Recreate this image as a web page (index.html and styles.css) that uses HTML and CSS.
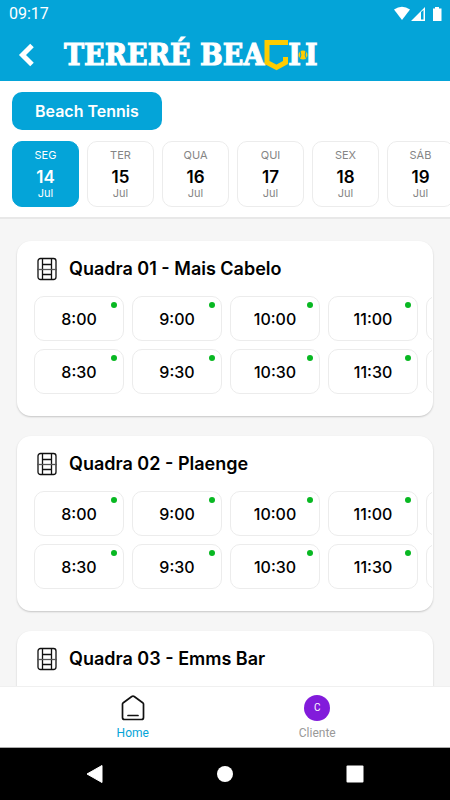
FILE: index.html
```html
<!DOCTYPE html>
<html lang="pt-BR">
<head>
<meta charset="utf-8">
<meta name="viewport" content="width=device-width, initial-scale=1">
<title>Tereré Beach</title>
<link rel="stylesheet" href="styles.css">
</head>
<body>
<svg class="symbols" aria-hidden="true">
  <symbol id="court" viewBox="0 0 20 24">
    <g fill="none" stroke="#111" stroke-width="1.3">
      <rect x="1" y="1.5" width="18" height="21" rx="2.5"/>
      <path d="M5.500 1.500v21M14.500 1.500v21M5.500 7.500h9M5.500 17.500h9"/>
      <path d="M0 12.500h20" stroke="#555"/>
    </g>
  </symbol>
</svg>
<header class="top">
  <div class="status">
    <span>09:17</span>
    <svg width="50" height="16" viewBox="0 0 50 16" fill="#fff" aria-hidden="true">
      <path d="M2 3.500Q10 -2 18 3.500L10 14Z"/>
      <path fill-rule="evenodd" d="M19 15L33 1V15ZM29 6V13.500H31.500V4Z"/>
      <path d="M41 2.500h2V1h4v1.500h2.500V15H41Z"/>
    </svg>
  </div>
  <div class="brandbar">
    <button class="back" aria-label="Voltar"><svg width="18" height="24" viewBox="0 0 18 24"><path d="M16 2.500L6.500 12L16 21.500" fill="none" stroke="#fff" stroke-width="5"/></svg></button>
    <h1 class="logo">
      <span>TERERÉ BEA</span>
      <svg class="shield" width="24" height="32" viewBox="0 0 24 32" role="img" aria-label="C"><path d="M22.500 6V3.500H3V23.500L12.500 28.500L21.500 23.500V18" fill="none" stroke="#fc0" stroke-width="5"/></svg>
      <span class="posts"><span>I</span><span>I</span><svg class="ball" width="10" height="10" viewBox="0 0 10 10" aria-hidden="true"><circle cx="5" cy="5" r="4.500" fill="#fc0"/><path d="M2 1Q4 5 1.500 9M8 1Q6 5 8.500 9" fill="none" stroke="#04a4d8"/></svg></span>
    </h1>
  </div>
</header>
<section class="filters">
  <button class="chip">Beach Tennis</button>
  <div class="days">
    <button class="day active"><span>SEG</span><b>14</b><span>Jul</span></button>
    <button class="day"><span>TER</span><b>15</b><span>Jul</span></button>
    <button class="day"><span>QUA</span><b>16</b><span>Jul</span></button>
    <button class="day"><span>QUI</span><b>17</b><span>Jul</span></button>
    <button class="day"><span>SEX</span><b>18</b><span>Jul</span></button>
    <button class="day"><span>SÁB</span><b>19</b><span>Jul</span></button>
  </div>
</section>
<main class="courts">
  <article class="court">
    <h2><svg width="20" height="24"><use href="#court"/></svg>Quadra 01 - Mais Cabelo</h2>
    <div class="slots">
      <button class="slot">8:00</button><button class="slot">8:30</button>
      <button class="slot">9:00</button><button class="slot">9:30</button>
      <button class="slot">10:00</button><button class="slot">10:30</button>
      <button class="slot">11:00</button><button class="slot">11:30</button>
      <button class="slot" aria-label="12:00"></button><button class="slot" aria-label="12:30"></button>
    </div>
  </article>
  <article class="court">
    <h2><svg width="20" height="24"><use href="#court"/></svg>Quadra 02 - Plaenge</h2>
    <div class="slots">
      <button class="slot">8:00</button><button class="slot">8:30</button>
      <button class="slot">9:00</button><button class="slot">9:30</button>
      <button class="slot">10:00</button><button class="slot">10:30</button>
      <button class="slot">11:00</button><button class="slot">11:30</button>
      <button class="slot" aria-label="12:00"></button><button class="slot" aria-label="12:30"></button>
    </div>
  </article>
  <article class="court">
    <h2><svg width="20" height="24"><use href="#court"/></svg>Quadra 03 - Emms Bar</h2>
  </article>
</main>
<nav class="tabs">
  <a class="tab current" href="#home">
    <svg width="26" height="26" viewBox="0 0 26 26" fill="none" stroke="#111" stroke-width="1.700" stroke-linejoin="round" stroke-linecap="round" aria-hidden="true"><path d="M2.500 9Q2.500 8.300 3.300 7.700L11.800 1.500Q13 .8 14.200 1.500L22.700 7.700Q23.500 8.300 23.500 9V22.500Q23.500 24.500 21.500 24.500H4.500Q2.500 24.500 2.500 22.500ZM8 20.500H18"/></svg>
    <span>Home</span>
  </a>
  <a class="tab" href="#cliente"><i class="avatar">C</i><span>Cliente</span></a>
</nav>
<footer class="system">
  <button aria-label="Voltar"><svg width="18" height="20" viewBox="0 0 18 20"><path d="M1 10L16 1.500V18.500Z" fill="#fff" stroke="#fff" stroke-linejoin="round"/></svg></button>
  <button aria-label="Início"><svg width="18" height="20" viewBox="0 0 18 20"><circle cx="9" cy="10" r="8" fill="#fff"/></svg></button>
  <button aria-label="Recentes"><svg width="18" height="20" viewBox="0 0 18 20"><rect x=".5" y="1.500" width="17" height="17" rx="1" fill="#fff"/></svg></button>
</footer>
</body>
</html>
```
FILE: styles.css
```css
* { box-sizing: border-box; }
body {
  margin: 0;
  height: 100vh;
  display: flex;
  flex-direction: column;
  overflow: hidden;
  background: #f6f6f6;
  color: #000;
  font-family: Inter, sans-serif;
}
button { font: inherit; color: inherit; background: none; border: 0; padding: 0; }
svg { display: block; flex: none; }
.symbols { position: absolute; width: 0; height: 0; }
.top { flex: none; background: #04a4d8; color: #fff; }
.status {
  display: flex;
  justify-content: space-between;
  align-items: center;
  height: 28px;
  padding: 0 8px 0 9px;
  font: 16px/28px Roboto, sans-serif;
}
.brandbar { display: flex; align-items: center; height: 53px; padding: 0 16px; }
.back { width: 48px; }
.logo {
  margin: 0;
  display: flex;
  align-items: center;
  white-space: nowrap;
  font: bold 30px/52px "DejaVu Serif Condensed", "DejaVu Serif", serif;
  font-stretch: condensed;
  -webkit-text-stroke: 1px #fff;
}
.posts { position: relative; display: flex; gap: 4px; }
.ball { position: absolute; left: calc(50% - 5px); top: calc(50% - 5px); }
.filters {
  flex: none;
  background: #fff;
  padding: 11px 0 10px 12px;
  border-bottom: 2px solid #e8e8e8;
}
.chip {
  display: block;
  height: 38px;
  padding: 0 23px;
  border-radius: 10px;
  background: #04a4d8;
  color: #fff;
  font-size: 16px;
  font-weight: 600;
}
.days { display: flex; gap: 8px; margin-top: 11px; overflow: hidden; }
.day {
  flex: none;
  width: 67px;
  height: 66px;
  display: flex;
  flex-direction: column;
  align-items: center;
  justify-content: center;
  border: 1px solid #ececec;
  border-radius: 10px;
  color: #858585;
  font-size: 11px;
  line-height: 14px;
}
.day b { color: #000; font-size: 17px; font-weight: 600; line-height: 18px; margin-top: 6px; }
.day.active { background: #04a4d8; border-color: #04a4d8; color: #fff; }
.day.active b { color: #fff; }
.courts {
  flex: 1;
  min-height: 0;
  overflow: hidden;
  padding: 22px 17px 0;
  display: flex;
  flex-direction: column;
  gap: 20px;
}
.court {
  flex: none;
  background: #fff;
  border-radius: 14px;
  padding: 14px 1px 22px 17px;
  box-shadow: 0 1px 2px rgba(0, 0, 0, .2);
}
.court h2 {
  display: flex;
  align-items: center;
  gap: 12px;
  margin: 0 0 14px;
  padding-left: 3px;
  font-size: 18px;
  font-weight: 600;
  line-height: 27px;
}
.slots {
  display: grid;
  grid-template-rows: 45px 45px;
  grid-auto-flow: column;
  grid-auto-columns: 90px;
  gap: 8px;
  overflow: hidden;
}
.slot {
  position: relative;
  border: 1px solid #ececec;
  border-radius: 10px;
  font-size: 16px;
  font-weight: 500;
}
.slot::after {
  content: "";
  position: absolute;
  top: 5px;
  right: 6px;
  width: 6px;
  height: 6px;
  border-radius: 50%;
  background: #08b822;
}
.tabs {
  flex: none;
  display: flex;
  justify-content: center;
  height: 62px;
  background: #fff;
  border-top: 1px solid #f0f0f0;
  border-bottom: 1px solid #aaa;
}
.tab {
  width: 41%;
  display: flex;
  flex-direction: column;
  align-items: center;
  padding-top: 8px;
  color: #999;
  text-decoration: none;
  font: 12px/16px Roboto, sans-serif;
}
.tab span { margin-top: 4px; }
.tab.current { color: #04a4d8; }
.avatar {
  width: 26px;
  height: 26px;
  border-radius: 50%;
  background: #821bdb;
  color: #fff;
  text-align: center;
  font: 10px/26px Roboto, sans-serif;
}
.system {
  flex: none;
  height: 52px;
  display: flex;
  align-items: center;
  justify-content: center;
  gap: 112px;
  background: #000;
}
```
